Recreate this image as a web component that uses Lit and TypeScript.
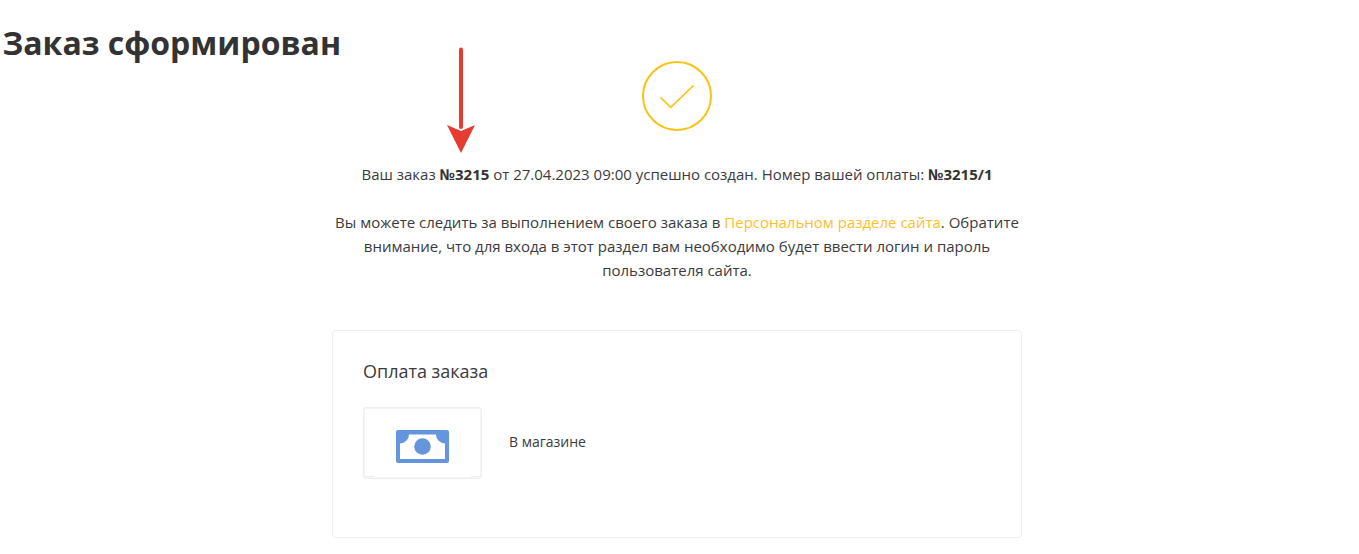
import { LitElement, html, css } from "lit";
import { customElement } from "lit/decorators.js";

@customElement("app-root")
export class AppRoot extends LitElement {
  static styles = css`
    :host {
      display: block;
      position: relative;
      height: 554px;
      overflow: hidden;
      background: #fff;
      font-family: "Open Sans", sans-serif;
      color: #3b3a40;
      font-size: 15px;
      line-height: 24px;
    }

    h1 {
      margin: 0;
      padding: 23px 0 0 2.5px;
      font-size: 32px;
      line-height: 40px;
      font-weight: 700;
      color: #333;
    }

    .content {
      width: 690px;
      margin-left: 332px;
      display: flex;
      flex-direction: column;
      align-items: center;
    }

    .check {
      display: block;
      margin-top: -2px;
    }

    .message {
      margin: 31px 0 0;
      text-align: center;
    }

    .follow {
      width: 690px;
      margin: 24px 0 0;
      text-align: center;
    }

    b {
      font-weight: 700;
      color: #333;
    }

    a {
      color: #fcc02e;
      text-decoration: none;
    }

    .card {
      box-sizing: border-box;
      width: 690px;
      height: 208px;
      margin-top: 48px;
      padding: 27px 30px;
      border: 1px solid #eee;
      border-radius: 4px;
    }

    h2 {
      margin: 0;
      font-size: 18px;
      line-height: 26px;
      font-weight: 400;
    }

    .method {
      display: flex;
      align-items: center;
      gap: 27px;
      margin-top: 23px;
    }

    .thumb {
      box-sizing: border-box;
      position: relative;
      width: 119px;
      height: 72px;
      padding-top: 7px;
      display: flex;
      align-items: center;
      justify-content: center;
      border: 1px solid #eee;
      border-radius: 3px;
      box-shadow: inset 0 0 0 1px #f6f6f6;
    }

    .thumb::before,
    .thumb::after {
      content: "";
      position: absolute;
      bottom: 1px;
      width: 9px;
      height: 1px;
      background: #eee;
    }

    .thumb::before {
      left: 1px;
    }

    .thumb::after {
      right: 1px;
    }

    .method span {
      padding-bottom: 2px;
      font-size: 14px;
      line-height: 20px;
    }

    .arrow {
      position: absolute;
      left: 447px;
      top: 47px;
    }
  `;

  render() {
    return html`
      <h1>Заказ сформирован</h1>
      <svg class="arrow" width="28" height="107" viewBox="0 0 28 107">
        <path d="M14 2.5V80" stroke="#e53c31" stroke-width="4" stroke-linecap="round" fill="none"></path>
        <path d="M0 78L14 84L28 78L14 106Z" fill="#e53c31"></path>
      </svg>
      <div class="content">
        <svg class="check" width="70" height="70" viewBox="0 0 70 70">
          <circle cx="35" cy="35" r="34" fill="none" stroke="#f8c40f" stroke-width="2"></circle>
          <path d="M18.5 36.5L28.7 46.3L51.5 24.5" fill="none" stroke="#f8c40f" stroke-width="1.7"></path>
        </svg>
        <p class="message">
          Ваш заказ <b>№3215</b> от 27.04.2023 09:00 успешно создан. Номер вашей оплаты: <b>№3215/1</b>
        </p>
        <p class="follow">
          Вы можете следить за выполнением своего заказа в
          <a href="#">Персональном разделе сайта</a>. Обратите<br />
          внимание, что для входа в этот раздел вам необходимо будет ввести логин и пароль<br />
          пользователя сайта.
        </p>
        <section class="card">
          <h2>Оплата заказа</h2>
          <div class="method">
            <div class="thumb">
              <svg width="53" height="33" viewBox="0 0 53 33">
                <path
                  fill="#6495dd"
                  fill-rule="evenodd"
                  d="M2 0H51A2 2 0 0 1 53 2V31A2 2 0 0 1 51 33H2A2 2 0 0 1 0 31V2A2 2 0 0 1 2 0ZM13 4.5A9 9 0 0 1 4 13.5V29H49V13.5A9 9 0 0 1 40 4.5Z"
                ></path>
                <circle cx="26.5" cy="16.5" r="8.3" fill="#6495dd"></circle>
              </svg>
            </div>
            <span>В магазине</span>
          </div>
        </section>
      </div>
    `;
  }
}
